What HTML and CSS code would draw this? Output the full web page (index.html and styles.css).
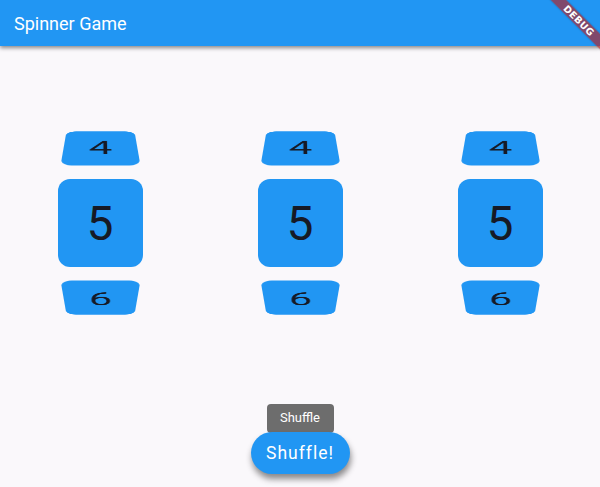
FILE: index.html
```html
<!DOCTYPE html>
<html>
<head>
<meta charset="utf-8">
<link rel="stylesheet" href="styles.css">
</head>
<body>
<header class="appbar"><span class="title">Spinner Game</span></header>
<main class="spinners">
  <div class="column">
    <div class="side"><div class="tile tile-top">4</div></div>
    <div class="tile tile-main">5</div>
    <div class="side"><div class="tile tile-bottom">6</div></div>
  </div>
  <div class="column">
    <div class="side"><div class="tile tile-top">4</div></div>
    <div class="tile tile-main">5</div>
    <div class="side"><div class="tile tile-bottom">6</div></div>
  </div>
  <div class="column">
    <div class="side"><div class="tile tile-top">4</div></div>
    <div class="tile tile-main">5</div>
    <div class="side"><div class="tile tile-bottom">6</div></div>
  </div>
</main>
<div class="fab-area">
  <div class="tooltip">Shuffle</div>
  <button class="fab">Shuffle!</button>
</div>
<div class="banner-clip"><div class="banner">DEBUG</div></div>
</body>
</html>
```
FILE: styles.css
```css
html, body {
  margin: 0;
  padding: 0;
}
body {
  width: 600px;
  height: 487px;
  overflow: hidden;
  position: relative;
  background: #faf8fb;
  font-family: Roboto, "Noto Sans", sans-serif;
}
.appbar {
  height: 46px;
  background: #2196f3;
  display: flex;
  align-items: center;
  padding-left: 14px;
  box-shadow: 0 2px 4px rgba(0, 0, 0, 0.45);
  position: relative;
  z-index: 1;
}
.title {
  color: #ffffff;
  font-size: 18px;
  font-weight: 400;
}
.spinners {
  display: grid;
  grid-template-columns: repeat(3, 1fr);
  padding-top: 84px;
}
.column {
  display: flex;
  flex-direction: column;
  align-items: center;
  gap: 15px;
}
.tile {
  background: #2196f3;
  color: #161a26;
  font-size: 48px;
  display: flex;
  align-items: center;
  justify-content: center;
  border-radius: 12px;
  width: 85px;
  height: 88px;
  box-sizing: border-box;
}
.side {
  height: 34px;
  width: 85px;
  display: flex;
  align-items: center;
  justify-content: center;
}
.tile-top, .tile-bottom {
  flex: none;
}
.tile-top {
  transform: perspective(420px) translateZ(-66px) rotateX(63.6deg);
}
.tile-bottom {
  transform: perspective(420px) translateZ(-66px) rotateX(-63.6deg);
}
.fab-area {
  position: absolute;
  left: 0;
  right: 0;
  bottom: 13px;
  display: flex;
  flex-direction: column;
  align-items: center;
}
.tooltip {
  background: rgba(97, 97, 97, 0.92);
  color: #ffffff;
  font-size: 13px;
  width: 67px;
  height: 29px;
  box-sizing: border-box;
  padding-top: 6px;
  text-align: center;
  border-radius: 4px;
  margin-bottom: -1px;
}
.fab {
  border: none;
  background: #2196f3;
  color: #ffffff;
  font-family: Roboto, "Noto Sans", sans-serif;
  font-size: 17.5px;
  letter-spacing: 1px;
  width: 99px;
  height: 42px;
  border-radius: 21px;
  box-shadow: 1px 5px 6px rgba(0, 0, 0, 0.45);
  padding: 0;
  position: relative;
}
.banner-clip {
  position: absolute;
  top: 0;
  right: 0;
  width: 80px;
  height: 80px;
  overflow: hidden;
  z-index: 2;
}
.banner {
  position: absolute;
  left: -1px;
  top: 15px;
  width: 120px;
  height: 11px;
  line-height: 11px;
  transform: rotate(45deg);
  background: rgba(183, 28, 28, 0.63);
  color: #ffffff;
  font-size: 9.5px;
  font-weight: 700;
  text-align: center;
  letter-spacing: 0.4px;
  font-family: "DejaVu Sans", sans-serif;
  box-shadow: 0 0 2px rgba(0, 0, 0, 0.3);
}
```
